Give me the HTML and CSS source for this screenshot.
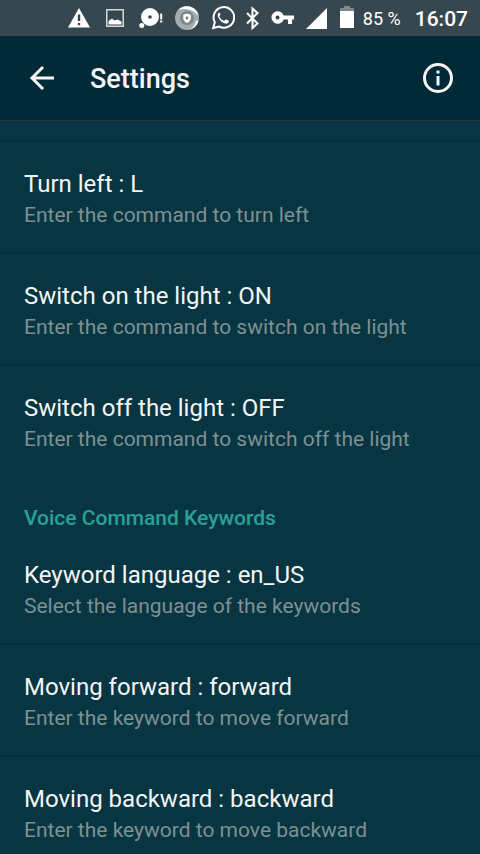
FILE: index.html
```html
<!DOCTYPE html>
<html lang="en">
<head>
<meta charset="utf-8">
<meta name="viewport" content="width=device-width, initial-scale=1">
<title>Settings</title>
<link rel="stylesheet" href="styles.css">
</head>
<body>
<div class="status">
  <div class="notifications">
    <svg viewBox="0 0 24 24"><path fill-rule="evenodd" d="M1 21.500h22L12 2zM10.800 8.500h2.400v6.500h-2.400zM10.800 17h2.400v2.200h-2.400z"/></svg>
    <svg viewBox="0 0 24 24"><path fill="#d5dadc" fill-rule="evenodd" d="M3 3h18v18H3zM4.500 4.500v15h15v-15z"/><path d="M5.500 18.500V15l3.500-2.500 2.500 2 3-1 4 2v3z"/></svg>
    <svg viewBox="0 0 24 24"><path fill-rule="evenodd" d="M11 2a9 9 0 1 1 0 18 9 9 0 0 1 0-18zM11 9.200a1.800 1.800 0 1 0 0 3.600 1.800 1.800 0 0 0 0-3.600z"/><circle cx="2.800" cy="19.500" r="2.500"/><path d="M21.200 7.500h2v6h-2zM21.200 14.500h2v2h-2z"/></svg>
    <svg viewBox="0 0 24 24"><circle cx="12" cy="12" r="12" fill="#a3acb0"/><path d="M3 4a12 12 0 0 1 20.500 6C18 3 10 2 3 4zM23.500 14.500A12 12 0 0 1 12 24c5-1 8-4 9-9z"/><circle cx="12" cy="12" r="7" fill="#79868c"/><path fill-rule="evenodd" d="M12 7.500l3.800 1.300v3.400c0 2.200-1.700 3.700-3.800 4.800-2.100-1.100-3.800-2.600-3.800-4.800V8.800zM12 10l-1.700 1.800L12 14.200l1.700-2.400z"/></svg>
    <svg viewBox="0 0 24 24"><path class="line" d="M2.200 22l1.600-5.700A10.300 10.300 0 1 1 8 20.500z"/><path d="M8.200 6.500c-1.500.8-1.900 2.500-1.100 4.400 1.400 3.200 4 5.700 7.300 6.700 1.600.4 3.200-.5 3.500-2 .1-.6 0-.8-.5-1l-2.300-1.100c-.5-.2-.7 0-1.200.7-.5.6-.7.7-1.300.4-2-.9-3.300-2.200-4.200-3.900-.3-.6.800-1.300 1-2 .1-.5-.6-1.700-.9-2.200z"/></svg>
  </div>
  <div class="system">
    <svg viewBox="0 0 24 24"><path class="line" d="M8 7l10.500 10.500-5 4.500V2.500l5 4.500L8 17.500"/></svg>
    <svg viewBox="0 0 24 24"><path fill-rule="evenodd" d="M12.700 9.500a6.300 6.300 0 1 0 0 4H17V18h4v-4.500h2v-4zM6.500 9.500a2 2 0 1 1 0 4 2 2 0 0 1 0-4z"/></svg>
    <svg viewBox="0 0 24 24"><path d="M3 23L24 2v21z"/></svg>
    <svg viewBox="0 0 24 24"><path fill="#7d878c" d="M5 5V2h4V0h6v2h4v3z"/><path d="M5 5h14v17H5z"/></svg>
  </div>
  <span class="charge">85 %</span>
  <time class="clock">16:07</time>
</div>
<header class="bar">
  <button class="icon" aria-label="Back"><svg viewBox="0 0 32 32"><path class="arrow" d="M28 16H6M17 5L6 16l11 11"/></svg></button>
  <h1>Settings</h1>
  <button class="icon" aria-label="Information"><svg viewBox="0 0 32 32"><circle class="ring" cx="16" cy="16" r="13.500"/><path d="M14.500 8.500h3v3h-3zM14.500 14h3v9.500h-3z"/></svg></button>
</header>
<main>
  <ul class="list commands">
    <li><button class="row"><span class="title">Turn left : L</span><span class="summary">Enter the command to turn left</span></button></li>
    <li><button class="row"><span class="title">Switch on the light : ON</span><span class="summary">Enter the command to switch on the light</span></button></li>
    <li><button class="row"><span class="title">Switch off the light : OFF</span><span class="summary">Enter the command to switch off the light</span></button></li>
  </ul>
  <h2>Voice Command Keywords</h2>
  <ul class="list">
    <li><button class="row"><span class="title">Keyword language : en_US</span><span class="summary">Select the language of the keywords</span></button></li>
    <li><button class="row"><span class="title">Moving forward : forward</span><span class="summary">Enter the keyword to move forward</span></button></li>
    <li><button class="row"><span class="title">Moving backward : backward</span><span class="summary">Enter the keyword to move backward</span></button></li>
  </ul>
</main>
</body>
</html>
```
FILE: styles.css
```css
* { box-sizing: border-box; }
body {
  margin: 0;
  height: 100vh;
  display: flex;
  flex-direction: column;
  background: #073642;
  color: #f5f5f5;
  font-family: Roboto, "Liberation Sans", sans-serif;
}
button {
  border: 0;
  padding: 0;
  background: none;
  color: inherit;
  font: inherit;
  text-align: left;
}
svg { display: block; fill: #fff; }
.status {
  flex: none;
  height: 36px;
  padding: 0 12px;
  display: flex;
  align-items: center;
  justify-content: flex-end;
  background: #37474f;
  color: #fff;
}
.notifications, .system { display: flex; }
.notifications { gap: 12px; margin-right: 4px; }
.system { gap: 8px; margin-right: 4px; }
.status svg { width: 24px; height: 24px; }
.line { fill: none; stroke: #fff; stroke-width: 2; }
.charge { font-size: 18px; margin-right: 14px; }
.clock { font-size: 21px; line-height: 28px; font-weight: 500; padding-top: 2px; }
.bar {
  flex: none;
  height: 85px;
  padding: 0 26px;
  display: flex;
  align-items: center;
  background: #002b36;
  border-bottom: 1px solid #21393d;
}
.icon svg { width: 32px; height: 32px; fill: #f5f5f5; }
.arrow, .ring { fill: none; stroke: #f5f5f5; stroke-width: 3; }
h1 {
  flex: 1;
  margin: 0 0 0 32px;
  padding-top: 2px;
  font-size: 27px;
  font-weight: 500;
  line-height: 32px;
}
main { flex: 1; min-height: 0; overflow-y: auto; scrollbar-width: none; }
.list { list-style: none; margin: 0; padding: 0; }
.commands { margin-top: 19px; border-top: 2px solid #062f3a; }
li + li { border-top: 2px solid #062f3a; }
.row {
  display: flex;
  flex-direction: column;
  width: 100%;
  padding: 26px 24px 22px;
}
.title { font-size: 24px; line-height: 32px; }
.summary { font-size: 21px; line-height: 30px; color: #7e9092; }
h2 {
  margin: 0;
  padding: 27px 24px 0;
  color: #2aa198;
  font-size: 21px;
  font-weight: 500;
  line-height: 30px;
}
```
